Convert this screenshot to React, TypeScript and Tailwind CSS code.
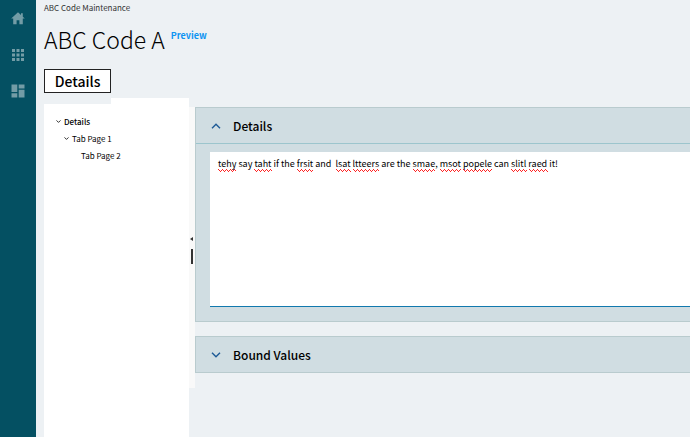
import { useRef, useState } from "react";

interface ChevronProps {
  className?: string;
  up?: boolean;
  weight?: number;
}

interface PanelProps {
  title: string;
  open: boolean;
  onToggle: () => void;
  children?: React.ReactNode;
}

const initialText = "tehy say taht if the frsit and  lsat ltteers are the smae, msot popele can slitl raed it!";
const misspelled = ["tehy", "taht", "frsit", "lsat", "ltteers", "smae", "msot", "popele", "slitl", "raed"];

const Chevron = ({ className, up = false, weight = 1.6 }: ChevronProps) => (
  <svg viewBox="0 0 10 10" className={className} fill="none" stroke="currentColor" strokeWidth={weight} aria-hidden="true">
    <path d={up ? "M1 7.2 5 3.2 9 7.2" : "M1 2.8 5 6.8 9 2.8"} />
  </svg>
);

const HomeIcon = () => (
  <svg viewBox="0 0 14 14" className="h-3.5 w-3.5" fill="currentColor" aria-hidden="true">
    <path d="M7 0.2 0.2 6.6H2.2V12.3H5.6V8.2H8.4V12.3H11.8V6.6H13.8L11.8 4.7V1.2H10V3Z" />
  </svg>
);

const AppsIcon = () => (
  <svg viewBox="0 0 14 14" className="h-3.5 w-3.5" fill="currentColor" aria-hidden="true">
    {[1, 5.5, 10].map((y) => [1, 5.5, 10].map((x) => <rect key={`${x}-${y}`} x={x} y={y} width="3" height="3" />))}
  </svg>
);

const DashboardIcon = () => (
  <svg viewBox="0 0 14 14" className="h-3.5 w-3.5" fill="currentColor" aria-hidden="true">
    <path d="M0.5 0.5H6.3V8H0.5ZM7.7 0.5H13.5V4.4H7.7ZM0.5 9.3H6.3V13.5H0.5ZM7.7 5.8H13.5V13.5H7.7Z" />
  </svg>
);

const Sidebar = () => (
  <nav className="flex w-9 shrink-0 flex-col items-center gap-[22px] bg-[#045062] pt-3 text-[#739ca6]">
    <a href="#home" aria-label="Home">
      <HomeIcon />
    </a>
    <a href="#apps" aria-label="Apps">
      <AppsIcon />
    </a>
    <a href="#dashboard" aria-label="Dashboard">
      <DashboardIcon />
    </a>
  </nav>
);

const Tree = () => (
  <div className="flex w-[145px] shrink-0 flex-col">
    <div className="ml-[67px] h-1.5 bg-white" />
    <ul className="flex-1 bg-white pt-[9px] pl-3 text-[8px] leading-[17px]">
      <li>
        <button className="flex items-center gap-[3px] font-medium">
          <Chevron className="h-[5px] w-[5px]" />
          Details
        </button>
        <ul className="pl-2">
          <li>
            <button className="flex items-center gap-[3px]">
              <Chevron className="h-[5px] w-[5px]" />
              Tab Page 1
            </button>
            <ul className="pl-[17px]">
              <li>
                <button>Tab Page 2</button>
              </li>
            </ul>
          </li>
        </ul>
      </li>
    </ul>
  </div>
);

const Splitter = () => (
  <div className="mt-[9px] flex h-[281px] w-1.5 shrink-0 flex-col items-center bg-[#f9f9f9] pt-[130px] text-[#333]">
    <svg viewBox="0 0 4 4" className="mb-2 h-1 w-1" fill="currentColor" aria-hidden="true">
      <path d="M0 2 3 0V4Z" />
    </svg>
    <div className="h-[15px] w-0.5 bg-[#333]" />
  </div>
);

const Panel = ({ title, open, onToggle, children }: PanelProps) => (
  <section className="border border-r-0 border-[#b9cbce] bg-[#d0dde2]">
    <h2>
      <button className="flex h-[35px] w-full items-center gap-3 pl-[15px] text-left text-[12px] font-medium" aria-expanded={open} onClick={onToggle}>
        <Chevron up={open} className="h-2.5 w-2.5 text-[#1d5a96]" weight={1.4} />
        {title}
      </button>
    </h2>
    {open && <div className="border-t border-[#9cc5cd] pt-2 pb-3.5 pl-3.5">{children}</div>}
  </section>
);

const SpellCheckedText = () => {
  const [value, setValue] = useState(initialText);
  const marks = useRef<HTMLDivElement>(null);

  return (
    <div className="relative h-[155px] border-b border-[#1279ae] bg-white text-[9px] leading-4">
      {/* red squiggles sit under the text box, word by word */}
      <div ref={marks} aria-hidden="true" className="absolute inset-0 overflow-hidden px-2 pt-1 whitespace-pre-wrap text-transparent">
        {value.split(/(\w+)/).map((part, i) =>
          misspelled.includes(part) ? (
            <span
              key={i}
              className="bg-[linear-gradient(90deg,#f22_1px,transparent_1px),linear-gradient(90deg,#f22_1px,transparent_1px),linear-gradient(90deg,#f22_1px,transparent_1px)] bg-[size:4px_1px,2px_1px,4px_1px] bg-[position:0_calc(100%-2px),1px_calc(100%-1px),2px_100%] bg-repeat-x pb-0.5"
            >
              {part}
            </span>
          ) : (
            part
          ),
        )}
      </div>
      <textarea
        aria-label="Details text"
        spellCheck={false}
        value={value}
        onChange={(e) => setValue(e.target.value)}
        onScroll={(e) => marks.current && (marks.current.scrollTop = e.currentTarget.scrollTop)}
        className="relative block h-full w-full resize-none bg-transparent px-2 pt-1 outline-none"
      />
    </div>
  );
};

const App = () => {
  const [open, setOpen] = useState({ details: true, bound: false });

  return (
    <div className="flex min-h-screen bg-[#edf1f4] font-['Noto_Sans_CJK_SC',sans-serif] text-black">
      <Sidebar />
      <main className="flex min-w-0 flex-1 flex-col pl-2">
        <header className="flex flex-col items-start">
          <p className="text-[8px] leading-4 text-[#333]">ABC Code Maintenance</p>
          <div className="mt-1 flex items-start gap-1.5">
            <h1 className="text-[23px] leading-[38px] font-light">ABC Code A</h1>
            <span className="mt-2 text-[9px] leading-4 font-bold text-[#0d94f2]">Preview</span>
          </div>
          <button className="mt-[11px] h-6 w-[67px] border border-[#222] bg-white text-[14px] leading-5 font-medium">Details</button>
        </header>
        <div className="mt-[5px] flex flex-1">
          <Tree />
          <Splitter />
          <div className="mt-[9px] flex min-w-0 flex-1 flex-col gap-3.5">
            <Panel title="Details" open={open.details} onToggle={() => setOpen({ ...open, details: !open.details })}>
              <SpellCheckedText />
            </Panel>
            <Panel title="Bound Values" open={open.bound} onToggle={() => setOpen({ ...open, bound: !open.bound })} />
          </div>
        </div>
      </main>
    </div>
  );
};

export default App;
